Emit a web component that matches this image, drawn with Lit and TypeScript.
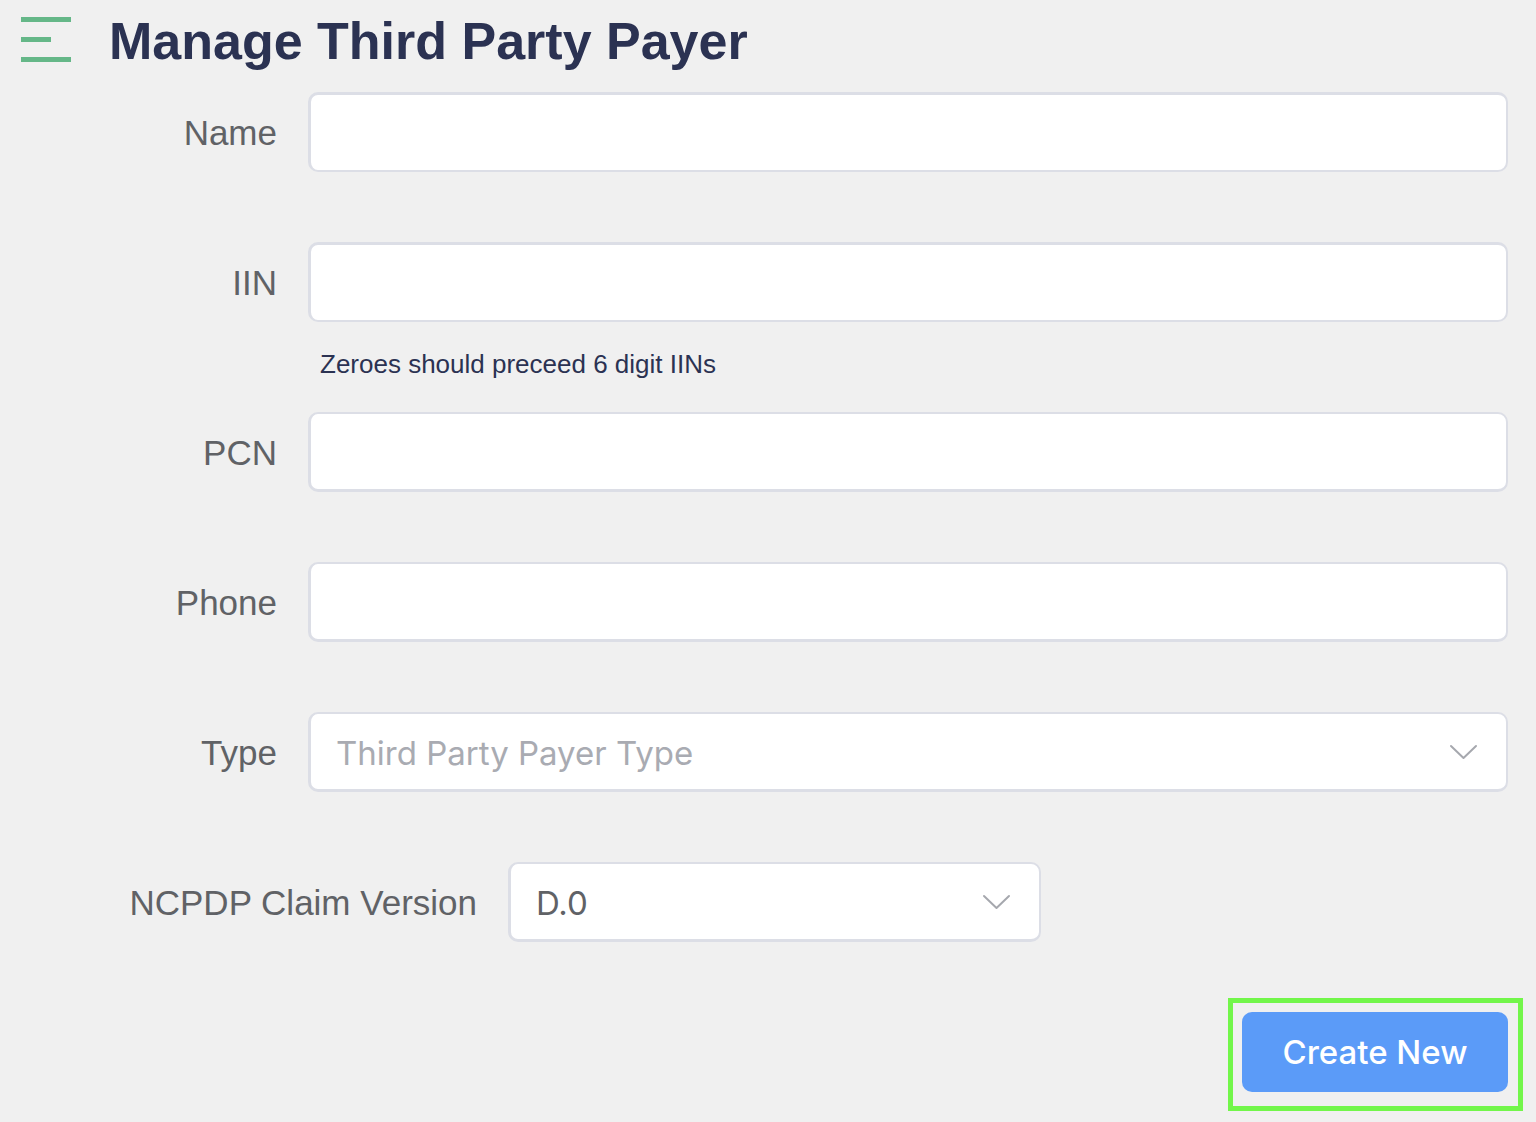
import { LitElement, html, css, svg } from "lit";
import { customElement, state } from "lit/decorators.js";

const chevron = html`
  <svg class="chevron" viewBox="0 0 26 14" aria-hidden="true">
    ${svg`<path d="M1 1 L13.5 13 L26 1" fill="none" stroke="#a6a8ae" stroke-width="2" stroke-linecap="round" stroke-linejoin="round" />`}
  </svg>
`;

@customElement("app-root")
export class AppRoot extends LitElement {
  static styles = css`
    :host {
      display: block;
      box-sizing: border-box;
      min-height: 100vh;
      background: #f0f0f0;
      font-family: "Liberation Sans", Arial, Helvetica, sans-serif;
      color: #2b3252;
    }
    *,
    *::before,
    *::after {
      box-sizing: border-box;
    }
    .header {
      display: flex;
      align-items: center;
      gap: 38px;
      height: 92px;
      padding: 0 20px 12px 21px;
    }
    .menu {
      display: block;
      flex: none;
      padding: 0;
      border: 0;
      background: none;
      cursor: pointer;
    }
    .menu-icon {
      display: block;
      width: 50px;
      height: 46px;
    }
    .title {
      margin: 0;
      padding-top: 2px;
      font-size: 52px;
      line-height: 60px;
      font-weight: 700;
      white-space: nowrap;
    }
    .form {
      display: flex;
      flex-direction: column;
    }
    .rows {
      display: flex;
      flex-direction: column;
      gap: 70px;
      padding-right: 28px;
    }
    .row {
      display: grid;
      grid-template-columns: 308px minmax(0, 1fr);
    }
    .row.hinted {
      margin-bottom: -38px;
    }
    .row.wide {
      grid-template-columns: 508px minmax(0, 533px);
    }
    .label {
      padding: 2px 31px 0 0;
      text-align: right;
      font-size: 35px;
      line-height: 78px;
      color: #606266;
      white-space: nowrap;
    }
    .control {
      width: 100%;
      height: 80px;
      margin: 0;
      padding: 2px 26px 0 25px;
      border: solid #dcdee6;
      border-width: 2px 2px 3px 3px;
      border-radius: 10px;
      outline: none;
      background: #fff;
      color: #606266;
      font-family: Inter, Roboto, sans-serif;
      font-size: 33px;
      appearance: none;
    }
    .control:focus-visible {
      border-color: #5b9bf8;
    }
    .control.raised {
      border-width: 3px 2px 2px 3px;
    }
    .control.empty {
      color: #a9abb2;
    }
    .select {
      display: grid;
      align-items: center;
    }
    .select > * {
      grid-area: 1 / 1;
    }
    .chevron {
      justify-self: end;
      width: 26px;
      height: 14px;
      margin-right: 32px;
      overflow: visible;
      pointer-events: none;
    }
    .hint {
      grid-column: 2;
      margin: 26px 0 0;
      padding-left: 12px;
      font-size: 26px;
      line-height: 32px;
    }
    .actions {
      display: flex;
      justify-content: flex-end;
      margin-top: 56px;
      padding: 0 13px 11px;
    }
    .highlight {
      padding: 9px 10px 14px 9px;
      border: 5px solid #72f64a;
    }
    .submit {
      display: block;
      width: 266px;
      height: 80px;
      padding: 0;
      border: 0;
      border-radius: 10px;
      background: #5b9bf8;
      color: #fff;
      font-family: Inter, Roboto, sans-serif;
      font-size: 33px;
      font-weight: 500;
      cursor: pointer;
    }
  `;

  @state() private payerType = "";

  private field(id: string, label: string, raised = false, hint = "", type = "text") {
    return html`
      <div class="row ${hint ? "hinted" : ""}">
        <label class="label" for=${id}>${label}</label>
        <input class="control ${raised ? "raised" : ""}" id=${id} name=${id} type=${type} />
        ${hint ? html`<p class="hint">${hint}</p>` : ""}
      </div>
    `;
  }

  render() {
    return html`
      <header class="header">
        <button class="menu" type="button" aria-label="Menu">
          <svg class="menu-icon" viewBox="0 0 50 46" fill="#65b788" aria-hidden="true">
            <rect y="0" width="50" height="5" />
            <rect y="20" width="30" height="5" />
            <rect y="40" width="50" height="5" />
          </svg>
        </button>
        <h1 class="title">Manage Third Party Payer</h1>
      </header>
      <form class="form" @submit=${(e: Event) => e.preventDefault()}>
        <div class="rows">
          ${this.field("name", "Name", true)}
          ${this.field("iin", "IIN", true, "Zeroes should preceed 6 digit IINs")}
          ${this.field("pcn", "PCN")}
          ${this.field("phone", "Phone", false, "", "tel")}
          <div class="row">
            <label class="label" for="type">Type</label>
            <div class="select">
              <select
                class="control ${this.payerType ? "" : "empty"}"
                id="type"
                name="type"
                @change=${(e: Event) => (this.payerType = (e.target as HTMLSelectElement).value)}
              >
                <option value="">Third Party Payer Type</option>
              </select>
              ${chevron}
            </div>
          </div>
          <div class="row wide">
            <label class="label" for="version">NCPDP Claim Version</label>
            <div class="select">
              <select class="control" id="version" name="version">
                <option>D.0</option>
              </select>
              ${chevron}
            </div>
          </div>
        </div>
        <div class="actions">
          <div class="highlight">
            <button class="submit" type="submit">Create New</button>
          </div>
        </div>
      </form>
    `;
  }
}
